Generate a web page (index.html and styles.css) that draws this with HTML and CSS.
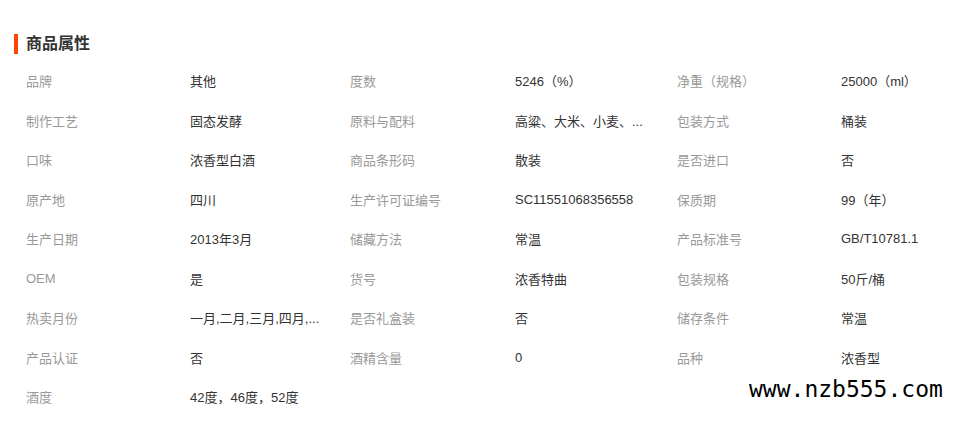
FILE: index.html
```html
<!DOCTYPE html>
<html lang="zh-CN">
<head>
    <meta charset="UTF-8">
    <meta name="viewport" content="width=device-width, initial-scale=1.0">
    <title>商品属性</title>
    <link rel="stylesheet" href="styles.css">
</head>
<body>

<div class="attrs">
    <h2 class="attrs-title">商品属性</h2>
    <div class="attrs-grid">
        <span class="name">品牌</span><span class="val">其他</span>
        <span class="name">度数</span><span class="val">5246（%）</span>
        <span class="name">净重（规格）</span><span class="val">25000（ml）</span>

        <span class="name">制作工艺</span><span class="val">固态发酵</span>
        <span class="name">原料与配料</span><span class="val">高粱、大米、小麦、...</span>
        <span class="name">包装方式</span><span class="val">桶装</span>

        <span class="name">口味</span><span class="val">浓香型白酒</span>
        <span class="name">商品条形码</span><span class="val">散装</span>
        <span class="name">是否进口</span><span class="val">否</span>

        <span class="name">原产地</span><span class="val">四川</span>
        <span class="name">生产许可证编号</span><span class="val">SC11551068356558</span>
        <span class="name">保质期</span><span class="val">99（年）</span>

        <span class="name">生产日期</span><span class="val">2013年3月</span>
        <span class="name">储藏方法</span><span class="val">常温</span>
        <span class="name">产品标准号</span><span class="val">GB/T10781.1</span>

        <span class="name">OEM</span><span class="val">是</span>
        <span class="name">货号</span><span class="val">浓香特曲</span>
        <span class="name">包装规格</span><span class="val">50斤/桶</span>

        <span class="name">热卖月份</span><span class="val">一月,二月,三月,四月,...</span>
        <span class="name">是否礼盒装</span><span class="val">否</span>
        <span class="name">储存条件</span><span class="val">常温</span>

        <span class="name">产品认证</span><span class="val">否</span>
        <span class="name">酒精含量</span><span class="val">0</span>
        <span class="name">品种</span><span class="val">浓香型</span>

        <span class="name">酒度</span><span class="val">42度，46度，52度</span>
    </div>
</div>

<div class="watermark">www.nzb555.com</div>

</body>
</html>
```

FILE: styles.css
```css
body {
    margin: 0;
    background: #fff;
    font-family: 'Liberation Sans', 'Noto Sans CJK SC', sans-serif;
    font-size: 13px;
    color: #333;
}
.attrs {
    padding: 34px 0 0 14px;
}
.attrs-title {
    margin: 0;
    height: 20px;
    line-height: 20px;
    padding-left: 8px;
    border-left: 4px solid #ff4400;
    font-size: 16px;
    font-weight: bold;
    color: #333;
}
.attrs-grid {
    display: grid;
    grid-template-columns: 164px 160px 165px 162px 164px 100px;
    grid-auto-rows: 39.5px;
    align-items: center;
    margin-top: 7px;
    padding-left: 12px;
}
.name {
    color: #999;
    white-space: nowrap;
}
.val {
    color: #333;
    white-space: nowrap;
}
.watermark {
    position: absolute;
    left: 749px;
    top: 376px;
    font-family: 'DejaVu Sans Mono', monospace;
    font-size: 23px;
    color: #000;
}
```
